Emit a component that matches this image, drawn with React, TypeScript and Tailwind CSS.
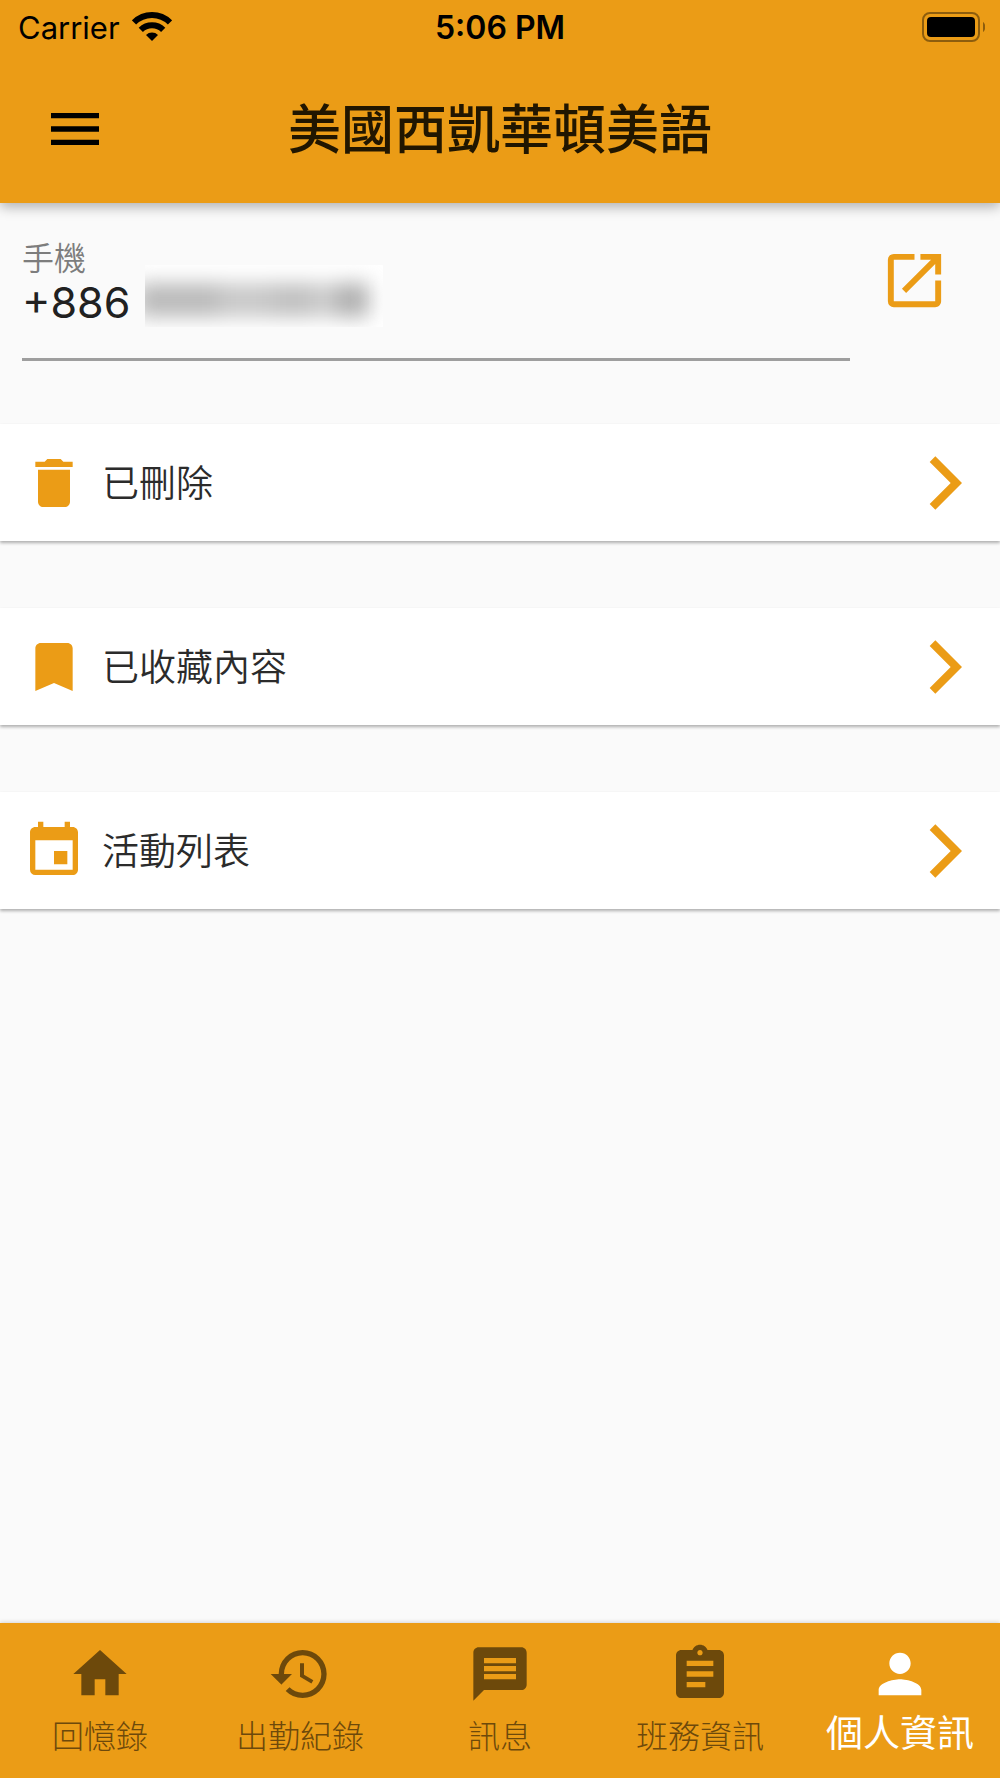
import React, { useState } from 'react';
import type { IconType } from 'react-icons';
import {
 MdAssignment,
 MdBookmark,
 MdDelete,
 MdEvent,
 MdHistory,
 MdHome,
 MdLaunch,
 MdMenu,
 MdMessage,
 MdPerson
} from 'react-icons/md';

interface NavItem {
 label: string;
 icon: IconType;
}

const cn = (...classes: Array<string | false | null | undefined>) =>
 classes.filter(Boolean).join(' ');

const SECTIONS: NavItem[] = [
 { label: '已刪除', icon: MdDelete },
 { label: '已收藏內容', icon: MdBookmark },
 { label: '活動列表', icon: MdEvent }
];

const TABS: NavItem[] = [
 { label: '回憶錄', icon: MdHome },
 { label: '出勤紀錄', icon: MdHistory },
 { label: '訊息', icon: MdMessage },
 { label: '班務資訊', icon: MdAssignment },
 { label: '個人資訊', icon: MdPerson }
];

const WifiIcon: React.FC = () => (
 <svg className="h-[30px] w-10" viewBox="0 0 40 30" fill="none" aria-hidden="true">
  <path d="M2 10.5a25.5 25.5 0 0 1 36 0" stroke="black" strokeWidth="6" />
  <path d="M8.8 17.8a16 16 0 0 1 22.4 0" stroke="black" strokeWidth="6" />
  <path d="M20 29l-6-6a8.5 8.5 0 0 1 12 0z" fill="black" />
 </svg>
);

const BatteryIcon: React.FC = () => (
 <svg className="h-[30px] w-[63px]" viewBox="0 0 63 30" aria-hidden="true">
  <rect x="1" y="1" width="56" height="28" rx="7" fill="none" stroke="black" strokeOpacity="0.4" strokeWidth="2" />
  <rect x="5" y="5" width="48" height="20" rx="4" fill="black" />
  <path d="M61 10c3 2 3 8 0 10z" fill="black" fillOpacity="0.4" />
 </svg>
);

const ChevronIcon: React.FC = () => (
 <svg className="h-16 w-16 text-[#eb9c16]" viewBox="0 0 24 24" fill="currentColor" aria-hidden="true">
  <path d="M5.88 4.12L13.76 12l-7.88 7.88L8 22l10-10L8 2z" />
 </svg>
);

const StatusBar: React.FC = () => (
 <div className="grid h-[54px] grid-cols-[1fr_auto_1fr] items-center px-[15px] font-['Inter',sans-serif] text-black">
  <div className="flex items-center gap-3 pl-[3px]">
   <span className="pt-[2px] text-[31px]">Carrier</span>
   <WifiIcon />
  </div>
  <span className="pt-[2px] text-[32px] font-semibold">5:06 PM</span>
  <div className="flex justify-end">
   <BatteryIcon />
  </div>
 </div>
);

const PhoneField: React.FC = () => (
 <section className="flex items-start gap-[29px] pt-8 pr-[50px] pb-[63px] pl-[22px]">
  <div className="min-w-0 flex-1 border-b-3 border-[#9e9e9e] pb-[31px]">
   <label htmlFor="phone" className="block text-[32px] leading-[42px] font-[350] text-[#7d7d7d]">
    手機
   </label>
   <div className="flex h-[50px] items-start">
    <input
     id="phone"
     readOnly
     value="+886"
     className="h-[50px] w-[123px] bg-transparent font-['Inter',sans-serif] text-[43px] text-[#212121] outline-none"
    />
    {/* masked part of the number */}
    <div className="-mt-3 flex h-[62px] w-[238px] shrink-0 items-center overflow-hidden bg-white" aria-hidden="true">
     <div className="-ml-2 mt-2 flex h-[34px] w-[232px] blur-[10px]">
      <div className="w-[82px] bg-[#bababa]" />
      <div className="w-[52px] bg-[#c8c8c8]" />
      <div className="w-[44px] bg-[#c0c0c0]" />
      <div className="w-[20px] bg-[#cecece]" />
      <div className="flex-1 bg-[#b0b0b0]" />
     </div>
    </div>
   </div>
  </div>
  <button type="button" aria-label="編輯手機" className="mt-[10px] text-[#eb9c16]">
   <MdLaunch className="h-[71px] w-[71px]" />
  </button>
 </section>
);

const App: React.FC = () => {
 const [activeTab, setActiveTab] = useState('個人資訊');

 return (
  <div className="flex min-h-screen flex-col bg-[#fafafa] font-['Noto_Sans_CJK_TC',sans-serif]">
   <header className="bg-[#eb9c16] shadow-[0_4px_12px_rgba(0,0,0,0.3)]">
    <StatusBar />
    <div className="grid h-[149px] grid-cols-[1fr_auto_1fr] items-center px-[43px]">
     <button type="button" aria-label="選單" className="justify-self-start text-black">
      <MdMenu className="h-16 w-16" />
     </button>
     <h1 className="pb-[5px] text-[53px] leading-none font-medium text-[#211600]">美國西凱華頓美語</h1>
    </div>
   </header>

   <main className="flex-1">
    <PhoneField />
    <ul className="flex flex-col gap-[67px]">
     {SECTIONS.map(({ label, icon: Icon }) => (
      <li key={label}>
       <button
        type="button"
        className="flex h-[117px] w-full items-center bg-white px-[22px] shadow-[0_2px_3px_rgba(0,0,0,0.3)]"
       >
        <Icon className="h-16 w-16 text-[#eb9c16]" />
        <span className="ml-4 flex-1 pb-1 text-left text-[37px] leading-[48px] font-[350] text-[#2b2b2b]">
         {label}
        </span>
        <ChevronIcon />
       </button>
      </li>
     ))}
    </ul>
   </main>

   <nav className="grid h-[155px] grid-cols-5 bg-[#eb9c16] shadow-[0_-1px_4px_rgba(0,0,0,0.15)]">
    {TABS.map(({ label, icon: Icon }) => {
     const active = label === activeTab;
     return (
      <button
       key={label}
       type="button"
       aria-current={active ? 'page' : undefined}
       onClick={() => setActiveTab(label)}
       className={cn(
        'flex flex-col items-center pt-[19px]',
        active ? 'text-white' : 'text-[#6d490b]'
       )}
      >
       <Icon className="h-16 w-16 shrink-0" />
       <span
        className={cn(
         'whitespace-nowrap',
         active ? 'text-[37px] leading-[50px]' : 'text-[32px] leading-[56px] font-light'
        )}
       >
        {label}
       </span>
      </button>
     );
    })}
   </nav>
  </div>
 );
};

export default App;
